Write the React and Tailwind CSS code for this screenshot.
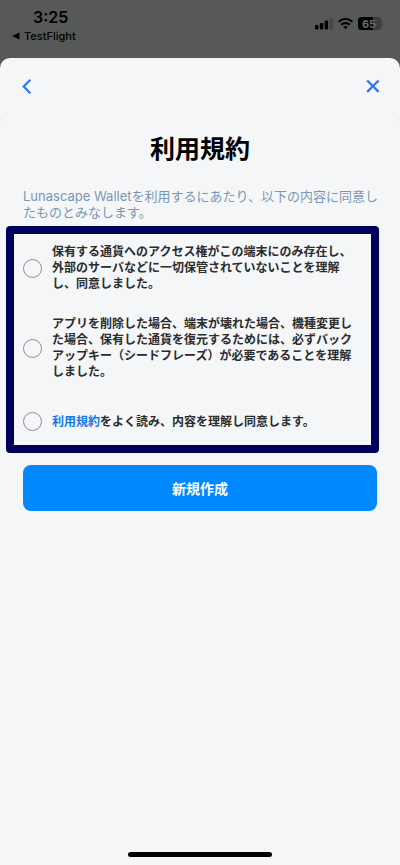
import React from "react";

function StatusBar() {
  return (
    <header className="flex h-[58px] items-start justify-between bg-[#575958] pl-3 pr-4 pt-2 text-black">
      <div className="flex flex-col">
        <time className="pl-[21px] text-[16px] font-semibold leading-[18px]">3:25</time>
        <button type="button" className="flex items-center gap-1 text-[11px] font-medium leading-[20px]">
          <svg width="8" height="8" viewBox="0 0 8 8" aria-hidden="true">
            <path d="M0 4 7.500 .5v7z" fill="currentColor" />
          </svg>
          TestFlight
        </button>
      </div>
      <div className="flex items-center gap-[5px] pt-[9px]">
        <svg width="18" height="13" viewBox="0 0 18 13" aria-label="Signal">
          <rect x="0" y="8" width="3.500" height="4.500" rx="1" />
          <rect x="4.800" y="6" width="3.500" height="6.500" rx="1" />
          <rect x="9.600" y="3.500" width="3.500" height="9" rx="1" />
          <rect x="14.400" y="1" width="3.500" height="11.500" rx="1" fill="#454746" />
        </svg>
        <svg width="15" height="13" viewBox="0 0 15 13" fill="none" stroke="black" strokeWidth="2.200" aria-label="Wi-Fi">
          <path d="M.7 4.800a9.700 9.700 0 0 1 13.600 0" />
          <path d="M3.200 7.800a6.100 6.100 0 0 1 8.600 0" />
          <path d="M7.500 12.300 5.200 10a3.300 3.300 0 0 1 4.600 0z" fill="black" stroke="none" />
        </svg>
        <svg width="26" height="13" viewBox="0 0 26 13" aria-label="Battery 65%">
          <path d="M3.500 0H20a3.500 3.500 0 0 1 3.500 3.500v6A3.500 3.500 0 0 1 20 13H3.500z" fill="#3c3e3d" />
          <path d="M3.500 0H15v13H3.500A3.500 3.500 0 0 1 0 9.500v-6A3.500 3.500 0 0 1 3.500 0z" />
          <path d="M24.500 4.500c1.300.5 1.300 3.500 0 4z" fill="#3c3e3d" />
          <text x="11" y="10.500" textAnchor="middle" fontSize="11" fontWeight="700" fill="#6a6c6b">65</text>
        </svg>
      </div>
    </header>
  );
}

function Agreement({ id, children }) {
  return (
    <div className="flex items-center gap-[10px]">
      <input
        id={id}
        type="checkbox"
        className="size-[19px] shrink-0 appearance-none rounded-full border border-[#8e8e93] checked:bg-[#0088ff]"
      />
      <label htmlFor={id} className="whitespace-nowrap text-[12px] font-bold leading-[16px] text-[#2b2c2e]">
        {children}
      </label>
    </div>
  );
}

export default function App() {
  return (
    <div
      lang="ja"
      className="flex min-h-screen flex-col bg-[#575958] font-['Inter','Noto_Sans_CJK_JP',sans-serif]"
    >
      <StatusBar />
      <main className="flex flex-1 flex-col rounded-t-[10px] bg-[#f4f6f8]">
        <nav className="flex h-14 items-center justify-between pl-[22px] pr-5">
          <button type="button" aria-label="戻る" className="text-[#2f76f6]">
            <svg width="10" height="16" viewBox="0 0 10 16" fill="none" stroke="currentColor" strokeWidth="2.200">
              <path d="M8.300 1.800 1.700 8.500l6.600 6.700" />
            </svg>
          </button>
          <button type="button" aria-label="閉じる" className="text-[#2f76f6]">
            <svg width="14" height="14" viewBox="0 0 14 14" fill="none" stroke="currentColor" strokeWidth="2.200">
              <path d="m1.200 1.500 11.400 11.400M12.600 1.500 1.200 12.900" />
            </svg>
          </button>
        </nav>
        <div className="flex h-2 justify-between text-[#eaecee]" aria-hidden="true">
          <svg width="8" height="8" viewBox="0 0 8 8" fill="none" stroke="currentColor">
            <path d="M.5 8A8 8 0 0 1 8 .5" />
          </svg>
          <svg width="8" height="8" viewBox="0 0 8 8" fill="none" stroke="currentColor">
            <path d="M0 .5A8 8 0 0 1 7.500 8" />
          </svg>
        </div>

        <h1 className="mt-[9px] text-center text-[25px] font-bold leading-[36px] text-black">利用規約</h1>
        <p className="mt-[21px] whitespace-nowrap px-[23px] text-[13px] leading-[16px] text-[#7b96b2]">
          Lunascape Walletを利用するにあたり、以下の内容に同意し
          <br />
          たものとみなします。
        </p>

        <section className="ml-[6px] mr-[21px] mt-[6px] flex flex-col gap-6 rounded-[4px] border-8 border-[#00005c] pb-[14px] pl-[9px] pt-[10px]">
          <Agreement id="custody">
            保有する通貨へのアクセス権がこの端末にのみ存在し、
            <br />
            外部のサーバなどに一切保管されていないことを理解
            <br />
            し、同意しました。
          </Agreement>
          <Agreement id="backup">
            アプリを削除した場合、端末が壊れた場合、機種変更し
            <br />
            た場合、保有した通貨を復元するためには、必ずバック
            <br />
            アップキー（シードフレーズ）が必要であることを理解
            <br />
            しました。
          </Agreement>
          <div className="pt-2">
            <Agreement id="terms">
              <a href="#terms" className="text-[#1677e8]">利用規約</a>
              をよく読み、内容を理解し同意します。
            </Agreement>
          </div>
        </section>

        <button
          type="button"
          className="mx-[23px] mt-3 h-[46px] rounded-lg bg-[#0088ff] text-[14px] font-bold text-white"
        >
          新規作成
        </button>

        <div className="mt-auto flex justify-center pb-2">
          <div className="h-[5px] w-[144px] rounded-full bg-black" />
        </div>
      </main>
    </div>
  );
}
